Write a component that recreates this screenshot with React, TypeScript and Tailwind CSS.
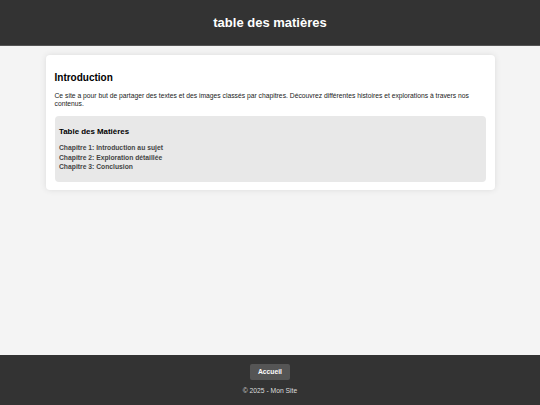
const CHAPTERS = [
  "Chapitre 1: Introduction au sujet",
  "Chapitre 2: Exploration détaillée",
  "Chapitre 3: Conclusion",
];

export default function App() {
  return (
    <div className="flex min-h-screen flex-col bg-[#f4f4f4] font-['Liberation_Sans',Arial,sans-serif] text-[#333]">
      {/* en-tête */}
      <header className="flex h-[46px] items-center justify-center border-b border-[#555] bg-[#333]">
        <h1 className="text-[13px] font-bold text-white">table des matières</h1>
      </header>

      {/* contenu */}
      <main className="flex-1 px-[45px] pt-[9px]">
        <section className="mx-auto w-[449px] rounded-[4px] bg-white px-[9px] pb-[8px] pt-[17px] shadow-[0_0_6px_rgba(0,0,0,0.1)]">
          <h2 className="text-[10px] font-bold leading-[12px] text-black">Introduction</h2>
          <p className="mt-[8px] text-[6.75px] leading-[7.5px] text-[#222]">
            Ce site a pour but de partager des textes et des images classés par chapitres. Découvrez différentes
            histoires et explorations à travers nos contenus.
          </p>
          <div className="mt-[9px] rounded-[4px] bg-[#e8e8e8] px-[4.5px] pb-[10px] pt-[11px]">
            <h3 className="text-[7.9px] font-bold leading-[10px] text-black">Table des Matières</h3>
            <ul className="mt-[6px] flex flex-col">
              {CHAPTERS.map((c) => (
                <li key={c} className="text-[6.75px] font-bold leading-[9.6px] text-[#444]">
                  {c}
                </li>
              ))}
            </ul>
          </div>
        </section>
      </main>

      {/* pied de page */}
      <footer className="flex h-[50px] flex-col items-center bg-[#333] pt-[9px]">
        <button className="h-[15.5px] w-[40px] rounded-[2px] bg-[#555] text-[6.75px] font-bold text-white">
          Accueil
        </button>
        <p className="mt-[6px] text-[6.75px] text-[#ddd]">© 2025 - Mon Site</p>
      </footer>
    </div>
  );
}
